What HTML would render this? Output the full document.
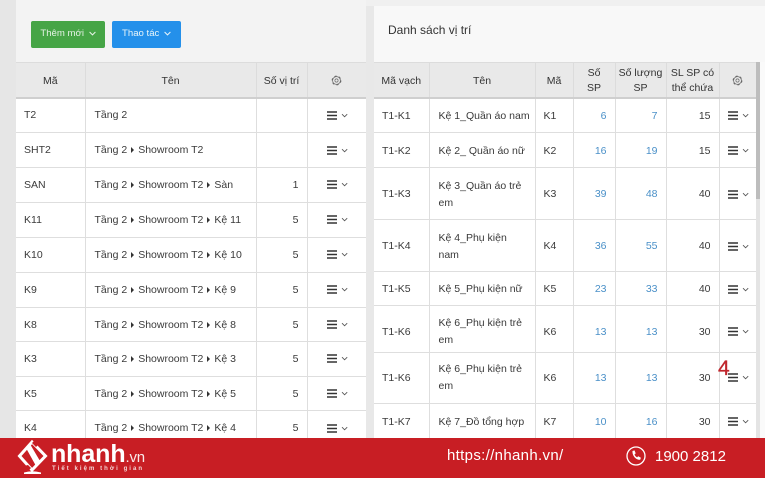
<!DOCTYPE html>
<html lang="vi"><head><meta charset="utf-8"><title>Danh sách vị trí</title>
<style>
html,body{margin:0;padding:0}
body{width:765px;height:478px;position:relative;overflow:hidden;background:#f4f4f4;font-family:"Liberation Sans","Noto Sans CJK SC",sans-serif;color:#3a3a3a;font-size:10.5px;filter:blur(.3px)}
.abs{position:absolute}
table{position:absolute;border-collapse:collapse;table-layout:fixed;background:#fff}
td,th{border:1px solid #dedede;padding:0 8px;font-weight:400;font-size:10.5px;line-height:17px;overflow:hidden}
td:nth-child(2){padding-left:9px;padding-right:2px}
th{background:#e9e9e9;text-align:center;color:#333;border-color:#dcdcdc;border-bottom:2px solid #cfcfcf;border-top:1px solid #dcdcdc;padding:3px 1px 0;line-height:15px}
td:first-child,th:first-child{border-left:0}
td:last-child,th:last-child{border-right:0}
td.r{text-align:right;padding:0 8px}td.c{text-align:center;padding:0 0 0 1px}
td.b{color:#4a90c8}
.d td{padding-top:1px}
.x .d td{padding-top:2px}
.x .s td{padding-top:6px}
.arr{display:inline-block;width:0;height:0;border-left:3.5px solid #333;border-top:3.5px solid transparent;border-bottom:3.5px solid transparent;margin:0 4px 0 4px;vertical-align:0}
svg{display:inline-block;vertical-align:middle}
.btn{position:absolute;top:21px;height:27px;border-radius:2px;color:#e4f2e4;font-size:9.6px;line-height:26px;text-align:center}
.btn svg{margin-left:2px}
</style></head><body>
<svg width="0" height="0" style="position:absolute"><defs>
<g id="m"><path d="M0 1h10M0 4.500h10M0 8h10" stroke="#333" stroke-width="1.500" fill="none"/><path d="M15 3.200l2.600 2.600 2.600-2.600" stroke="#555" stroke-width=".9" fill="none"/></g>
<g id="g" fill="none" stroke="#666"><circle cx="5.500" cy="5.500" r="1.600" stroke-width=".7"/><circle cx="5.500" cy="5.500" r="3.900" stroke-width=".7"/><circle cx="5.500" cy="5.500" r="4.500" stroke-width=".8" stroke-dasharray="2.360 2.350"/></g>
</defs></svg>

<div class="abs" style="left:0;top:0;width:16px;height:438px;background:#e6e6e6"></div>
<div class="abs" style="left:16px;top:0;width:350px;height:62px;background:#f3f3f3"></div>
<div class="abs" style="left:366px;top:6px;width:8px;height:432px;background:#e8e8e8"></div>
<div class="abs" style="left:366px;top:0;width:399px;height:6px;background:#f0f0f0"></div>
<div class="abs" style="left:374px;top:6px;width:391px;height:56px;background:#f8f8f8"></div>
<div class="abs" style="left:760px;top:62px;width:5px;height:376px;background:#fafafa"></div>

<div class="btn" style="left:31px;width:74px;background:#46a546">Thêm mới <svg width="7" height="5"><path d="M.6 1l2.900 2.900L6.400 1" fill="none" stroke="#e8f5e8" stroke-width="1"/></svg></div>
<div class="btn" style="left:112px;width:69px;background:#2490ea;color:#e8f5fa">Thao tác <svg width="7" height="5"><path d="M.6 1l2.900 2.900L6.400 1" fill="none" stroke="#e8f5fa" stroke-width="1"/></svg></div>

<div class="abs" style="left:388px;top:23px;font-size:12px;line-height:15px;color:#333">Danh sách vị trí</div>

<table style="left:16px;top:62px;width:350px">
<colgroup><col style="width:69px"><col style="width:171px"><col style="width:51px"><col style="width:59px"></colgroup>
<tr style="height:35px"><th>Mã</th><th>Tên</th><th>Số vị trí</th><th><svg width="11" height="11"><use href="#g"/></svg></th></tr>
<tr class="d" style="height:35px"><td>T2</td><td>Tầng 2</td><td class="r"></td><td class="c"><svg width="21" height="9"><use href="#m"/></svg></td></tr>
<tr class="d" style="height:35px"><td>SHT2</td><td>Tầng 2<i class="arr"></i>Showroom T2</td><td class="r"></td><td class="c"><svg width="21" height="9"><use href="#m"/></svg></td></tr>
<tr style="height:35px"><td>SAN</td><td>Tầng 2<i class="arr"></i>Showroom T2<i class="arr"></i>Sàn</td><td class="r">1</td><td class="c"><svg width="21" height="9"><use href="#m"/></svg></td></tr>
<tr style="height:35px"><td>K11</td><td>Tầng 2<i class="arr"></i>Showroom T2<i class="arr"></i>Kệ 11</td><td class="r">5</td><td class="c"><svg width="21" height="9"><use href="#m"/></svg></td></tr>
<tr style="height:35px"><td>K10</td><td>Tầng 2<i class="arr"></i>Showroom T2<i class="arr"></i>Kệ 10</td><td class="r">5</td><td class="c"><svg width="21" height="9"><use href="#m"/></svg></td></tr>
<tr style="height:35px"><td>K9</td><td>Tầng 2<i class="arr"></i>Showroom T2<i class="arr"></i>Kệ 9</td><td class="r">5</td><td class="c"><svg width="21" height="9"><use href="#m"/></svg></td></tr>
<tr class="d" style="height:34px"><td>K8</td><td>Tầng 2<i class="arr"></i>Showroom T2<i class="arr"></i>Kệ 8</td><td class="r">5</td><td class="c"><svg width="21" height="9"><use href="#m"/></svg></td></tr>
<tr style="height:35px"><td>K3</td><td>Tầng 2<i class="arr"></i>Showroom T2<i class="arr"></i>Kệ 3</td><td class="r">5</td><td class="c"><svg width="21" height="9"><use href="#m"/></svg></td></tr>
<tr class="d" style="height:34px"><td>K5</td><td>Tầng 2<i class="arr"></i>Showroom T2<i class="arr"></i>Kệ 5</td><td class="r">5</td><td class="c"><svg width="21" height="9"><use href="#m"/></svg></td></tr>
<tr class="d" style="height:35px"><td>K4</td><td>Tầng 2<i class="arr"></i>Showroom T2<i class="arr"></i>Kệ 4</td><td class="r">5</td><td class="c"><svg width="21" height="9"><use href="#m"/></svg></td></tr>
</table>

<table class="x" style="left:374px;top:62px;width:382px">
<colgroup><col style="width:55px"><col style="width:106px"><col style="width:38px"><col style="width:42px"><col style="width:51px"><col style="width:53px"><col style="width:37px"></colgroup>
<tr style="height:35px"><th>Mã vạch</th><th>Tên</th><th>Mã</th><th>Số<br>SP</th><th>Số lượng<br>SP</th><th>SL SP có<br>thể chứa</th><th><svg width="11" height="11"><use href="#g"/></svg></th></tr>
<tr class="d" style="height:35px"><td>T1-K1</td><td style="white-space:nowrap">Kệ 1_Quần áo nam</td><td>K1</td><td class="r b">6</td><td class="r b">7</td><td class="r">15</td><td class="c"><svg width="21" height="9"><use href="#m"/></svg></td></tr>
<tr class="d" style="height:35px"><td>T1-K2</td><td style="white-space:nowrap">Kệ 2_ Quần áo nữ</td><td>K2</td><td class="r b">16</td><td class="r b">19</td><td class="r">15</td><td class="c"><svg width="21" height="9"><use href="#m"/></svg></td></tr>
<tr class="d" style="height:52px"><td>T1-K3</td><td>Kệ 3_Quần áo trẻ<br>em</td><td>K3</td><td class="r b">39</td><td class="r b">48</td><td class="r">40</td><td class="c"><svg width="21" height="9"><use href="#m"/></svg></td></tr>
<tr class="d" style="height:52px"><td>T1-K4</td><td>Kệ 4_Phụ kiện<br>nam</td><td>K4</td><td class="r b">36</td><td class="r b">55</td><td class="r">40</td><td class="c"><svg width="21" height="9"><use href="#m"/></svg></td></tr>
<tr class="d" style="height:34px"><td>T1-K5</td><td style="white-space:nowrap">Kệ 5_Phụ kiện nữ</td><td>K5</td><td class="r b">23</td><td class="r b">33</td><td class="r">40</td><td class="c"><svg width="21" height="9"><use href="#m"/></svg></td></tr>
<tr class="s" style="height:47px"><td>T1-K6</td><td>Kệ 6_Phụ kiện trẻ<br>em</td><td>K6</td><td class="r b">13</td><td class="r b">13</td><td class="r">30</td><td class="c"><svg width="21" height="9"><use href="#m"/></svg></td></tr>
<tr style="height:51px"><td>T1-K6</td><td>Kệ 6_Phụ kiện trẻ<br>em</td><td>K6</td><td class="r b">13</td><td class="r b">13</td><td class="r">30</td><td class="c"><svg width="21" height="9"><use href="#m"/></svg></td></tr>
<tr class="d" style="height:35px"><td>T1-K7</td><td style="white-space:nowrap">Kệ 7_Đồ tổng hợp</td><td>K7</td><td class="r b">10</td><td class="r b">16</td><td class="r">30</td><td class="c"><svg width="21" height="9"><use href="#m"/></svg></td></tr>
</table>

<div class="abs" style="left:756px;top:62px;width:4px;height:376px;background:#e4e4e4"></div>
<div class="abs" style="left:756px;top:62px;width:4px;height:137px;background:#bdbdbd"></div>

<div class="abs" style="left:718px;top:357px;font-size:21px;line-height:24px;color:#c0272d;-webkit-text-stroke:.3px #c0272d">4</div>

<div class="abs" style="left:0;top:438px;width:765px;height:40px;background:#c81e24;overflow:hidden">
<svg class="abs" style="left:17px;top:1px" width="32" height="37" viewBox="0 0 32 37">
<path d="M15 3L2.500 17 15 31 28.500 17z" fill="none" stroke="#fff" stroke-width="3"/>
<path d="M9 9l4-4 10 17-4 5z" fill="#fff"/>
<path d="M18 1l4 4-3 3-4-4zM7 27l4-1 3 3-3 3z" fill="#c81e24"/>
<path d="M7 33.500q8-2.500 17 0v1.500H7z" fill="#fff"/>
</svg>
<div class="abs" style="left:51px;top:2px;font-size:25px;line-height:28px;font-weight:700;color:#fff;letter-spacing:-.1px;white-space:nowrap">nhanh<span style="font-size:15px;font-weight:400;letter-spacing:-.2px;opacity:.9">.vn</span></div>
<div class="abs" style="left:52px;top:27px;font-size:6px;line-height:8px;font-weight:700;color:#f3d7d7;letter-spacing:2.05px;white-space:nowrap">Tiết kiệm thời gian</div>
<div class="abs" style="left:447px;top:9px;font-size:15px;line-height:18px;color:#fff;letter-spacing:.33px;white-space:nowrap">https://nhanh.vn/</div>
<svg class="abs" style="left:626px;top:8px" width="20" height="20" viewBox="0 0 20 20"><circle cx="10" cy="10" r="9" fill="none" stroke="#fff" stroke-width="1.300"/><path d="M6.500 5l2-.6 1.200 3-1.200 1c.5 1.400 1.300 2.300 2.600 3l1.100-1.100 2.700 1.500-.7 1.900c-4 .6-8.200-4-7.700-8.700z" fill="#fff"/></svg>
<div class="abs" style="left:655px;top:10px;font-size:15px;line-height:18px;color:#fff;white-space:nowrap">1900 2812</div>
</div>
</body></html>
